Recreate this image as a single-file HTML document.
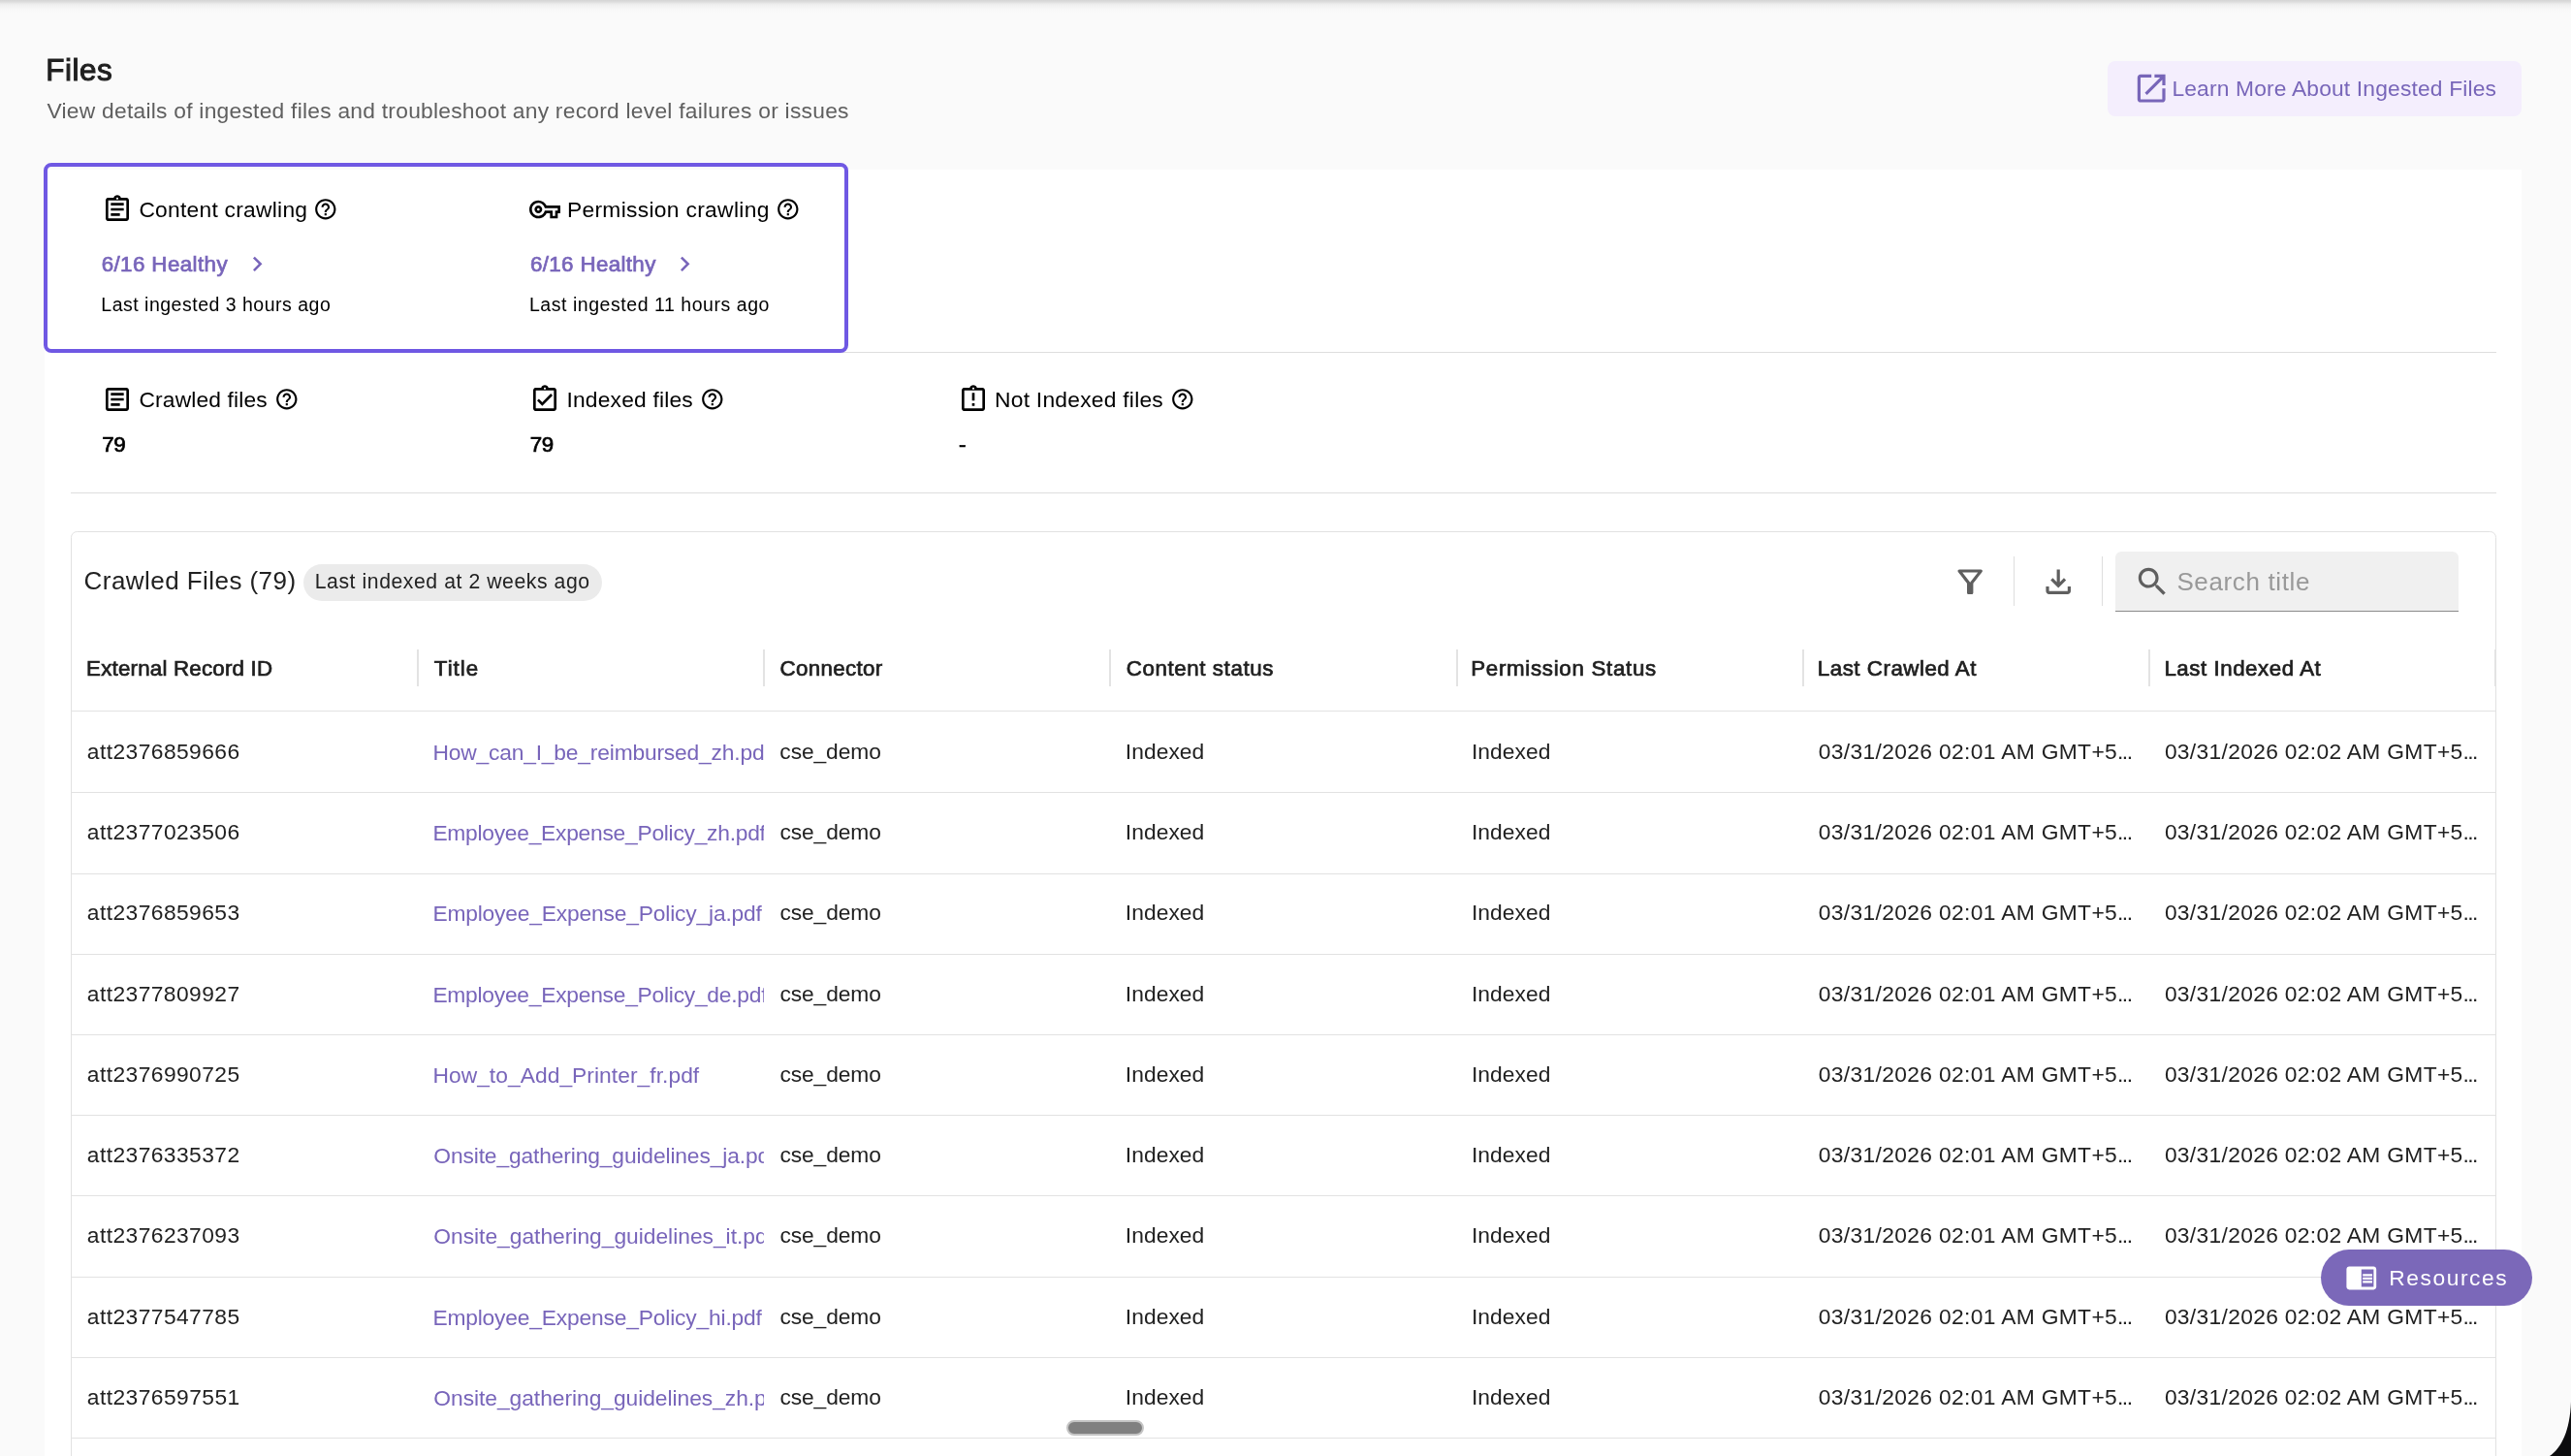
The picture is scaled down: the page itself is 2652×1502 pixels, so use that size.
<!DOCTYPE html>
<html lang="en"><head><meta charset="utf-8"><title>Files</title>
<style>
html,body{margin:0;padding:0}
#app{position:absolute;left:0;top:0;width:2652px;height:1502px;will-change:transform}
body{width:2652px;height:1502px;overflow:hidden;position:relative;background:#fafafa;font-family:"Liberation Sans",sans-serif;color:#000}
.t{position:absolute;white-space:nowrap;line-height:1;margin:0;font-weight:400;text-decoration:none}
.ic{position:absolute;display:block}
.abs{position:absolute}
#topshadow{left:0;top:0;width:2652px;height:16px;background:linear-gradient(to bottom,#d4d4d4 0px,#dddddd 2px,#ebebeb 4px,#f2f2f2 6px,#f5f5f5 8px,#f8f8f8 10px,#fafafa 14px)}
#panel{left:46px;top:175px;width:2555px;height:1327px;background:#fff}
#learn{left:2174px;top:63px;width:427px;height:57px;border-radius:8px;background:#f4eefd}
#hl{left:45px;top:168px;width:822px;height:188px;border:4px solid #6f58e3;border-radius:8px}
.hr{position:absolute;height:1px;background:#dedede}
#card{left:73px;top:548px;width:2500px;height:980px;border:1px solid #e2e2e2;border-radius:6.4px}
.vdiv{position:absolute;width:1px;background:#dedede}
#chip{left:313px;top:582px;width:308px;height:38.4px;border-radius:20px;background:#ebebeb}
#search{left:2182px;top:569px;width:354px;height:61px;background:#f0f0f0;border-radius:6.4px 6.4px 0 0;border-bottom:1.4px solid #8a8a8a}
.colsep{position:absolute;top:670px;width:2px;height:38px;background:#e3e3e3}
.row{position:absolute;left:74px;width:2500px;height:1px;background:#e2e2e2}
.el{letter-spacing:-1.55px}
.cell{position:absolute;overflow:hidden;height:60px}
#fab{left:2394.4px;top:1289px;width:217.6px;height:58px;border-radius:29px;background:#7b68b9}
#thumb{left:1100px;top:1465px;width:76px;height:12px;border-radius:8px;background:#808080;border:2px solid #c4c4c4}
#corner{right:0;bottom:0;width:60px;height:60px}
</style></head><body>

<div id="app">
<div class="abs" id="topshadow"></div>
<header>
<h1 class="t" id="h_files" style="left:47.35px;top:57px;font-size:31.4px;color:#1f1f1f;-webkit-text-stroke:1.04px #1f1f1f;letter-spacing:0.505px;">Files</h1>
<p class="t" id="h_sub" style="left:48.51px;top:103px;font-size:22.8px;color:#5f5f5f;letter-spacing:0.246px;">View details of ingested files and troubleshoot any record level failures or issues</p>
<a class="abs" id="learn"></a>
<svg class="ic" style="left:2200.00px;top:71.80px;width:38.4px;height:38.4px;" viewBox="0 0 24 24" fill="#7866b9"><path d="M19 19H5V5h7V3H5c-1.11 0-2 .9-2 2v14c0 1.1.89 2 2 2h14c1.1 0 2-.9 2-2v-7h-2v7zM14 3v2h3.59l-9.83 9.83 1.41 1.41L19 6.41V10h2V3h-7z"/></svg>
<span class="t" id="learn_t" style="left:2240.42px;top:80px;font-size:22.8px;color:#7866b9;letter-spacing:0.170px;">Learn More About Ingested Files</span>
</header>
<main>
<div class="abs" id="panel"></div>
<div class="hr" style="left:74px;top:363px;width:2501px"></div>
<div class="hr" style="left:73px;top:508px;width:2502px"></div>
<div class="abs" id="hl"></div>
<section>
<svg class="ic" style="left:104.90px;top:199.60px;width:32px;height:32px;" viewBox="0 0 24 24" fill="#000"><path d="M7 15h7v2H7zm0-4h10v2H7zm0-4h10v2H7zm12-4h-4.18C14.4 1.84 13.3 1 12 1c-1.3 0-2.4.84-2.82 2H5c-.14 0-.27.01-.4.04-.39.08-.74.28-1.01.55-.18.18-.33.4-.43.64-.1.23-.16.49-.16.77v14c0 .27.06.54.16.78s.25.45.43.64c.27.27.62.47 1.01.55.13.02.26.03.4.03h14c1.1 0 2-.9 2-2V5c0-1.1-.9-2-2-2zm-7-.25c.41 0 .75.34.75.75s-.34.75-.75.75-.75-.34-.75-.75.34-.75.75-.75zM19 19H5V5h14v14z"/></svg>
<span class="t" id="s1a" style="left:143.40px;top:205px;font-size:22.8px;color:#000;letter-spacing:0.254px;">Content crawling</span>
<svg class="ic" style="left:323.00px;top:203.40px;width:25.6px;height:25.6px;" viewBox="0 0 24 24" fill="#000"><path d="M11 18h2v-2h-2v2zm1-16C6.48 2 2 6.48 2 12s4.48 10 10 10 10-4.48 10-10S17.52 2 12 2zm0 18c-4.41 0-8-3.59-8-8s3.59-8 8-8 8 3.59 8 8-3.59 8-8 8zm0-14c-2.21 0-4 1.79-4 4h2c0-1.1.9-2 2-2s2 .9 2 2c0 2-3 1.75-3 5h2c0-2.25 3-2.5 3-5 0-2.21-1.79-4-4-4z"/></svg>
<span class="t" id="s1b" style="left:104.64px;top:262px;font-size:22.3px;color:#7865ba;-webkit-text-stroke:0.74px #7865ba;letter-spacing:0.430px;">6/16 Healthy</span>
<svg class="ic" style="left:249.80px;top:257.00px;width:30.7px;height:30.7px;" viewBox="0 0 24 24" fill="#7865ba"><path d="M10 6L8.59 7.41 13.17 12l-4.58 4.59L10 18l6-6z"/></svg>
<span class="t" id="s1c" style="left:104.29px;top:305px;font-size:19.5px;color:#000;letter-spacing:0.504px;">Last ingested 3 hours ago</span>
<svg class="ic" style="left:546.00px;top:200.20px;width:32px;height:32px;" viewBox="0 0 24 24" fill="#000"><path d="M22 19h-6v-4h-2.68c-1.14 2.42-3.6 4-6.32 4-3.86 0-7-3.14-7-7s3.14-7 7-7c2.72 0 5.17 1.58 6.32 4H24v6h-2v4zm-4-2h2v-4h2v-2H11.94l-.23-.67C11.01 8.34 9.11 7 7 7c-2.76 0-5 2.24-5 5s2.24 5 5 5c2.11 0 4.01-1.34 4.71-3.33l.23-.67H18v4zM7 15c-1.65 0-3-1.35-3-3s1.35-3 3-3 3 1.35 3 3-1.35 3-3 3zm0-4c-.55 0-1 .45-1 1s.45 1 1 1 1-.45 1-1-.45-1-1-1z"/></svg>
<span class="t" id="s2a" style="left:584.92px;top:205px;font-size:22.8px;color:#000;letter-spacing:0.317px;">Permission crawling</span>
<svg class="ic" style="left:800.40px;top:203.40px;width:25.6px;height:25.6px;" viewBox="0 0 24 24" fill="#000"><path d="M11 18h2v-2h-2v2zm1-16C6.48 2 2 6.48 2 12s4.48 10 10 10 10-4.48 10-10S17.52 2 12 2zm0 18c-4.41 0-8-3.59-8-8s3.59-8 8-8 8 3.59 8 8-3.59 8-8 8zm0-14c-2.21 0-4 1.79-4 4h2c0-1.1.9-2 2-2s2 .9 2 2c0 2-3 1.75-3 5h2c0-2.25 3-2.5 3-5 0-2.21-1.79-4-4-4z"/></svg>
<span class="t" id="s2b" style="left:546.96px;top:262px;font-size:22.3px;color:#7865ba;-webkit-text-stroke:0.74px #7865ba;letter-spacing:0.377px;">6/16 Healthy</span>
<svg class="ic" style="left:690.60px;top:257.00px;width:30.7px;height:30.7px;" viewBox="0 0 24 24" fill="#7865ba"><path d="M10 6L8.59 7.41 13.17 12l-4.58 4.59L10 18l6-6z"/></svg>
<span class="t" id="s2c" style="left:545.93px;top:305px;font-size:19.5px;color:#000;letter-spacing:0.549px;">Last ingested 11 hours ago</span>
</section>
<section>
<svg class="ic" style="left:104.90px;top:396.00px;width:32px;height:32px;" viewBox="0 0 24 24" fill="#000"><path d="M19 5v14H5V5h14m0-2H5c-1.1 0-2 .9-2 2v14c0 1.1.9 2 2 2h14c1.1 0 2-.9 2-2V5c0-1.1-.9-2-2-2z M14 17H7v-2h7v2zm3-4H7v-2h10v2zm0-4H7V7h10v2z"/></svg>
<span class="t" id="c1a" style="left:143.50px;top:401px;font-size:22.8px;color:#000;letter-spacing:0.138px;">Crawled files</span>
<svg class="ic" style="left:283.20px;top:399.10px;width:25.6px;height:25.6px;" viewBox="0 0 24 24" fill="#000"><path d="M11 18h2v-2h-2v2zm1-16C6.48 2 2 6.48 2 12s4.48 10 10 10 10-4.48 10-10S17.52 2 12 2zm0 18c-4.41 0-8-3.59-8-8s3.59-8 8-8 8 3.59 8 8-3.59 8-8 8zm0-14c-2.21 0-4 1.79-4 4h2c0-1.1.9-2 2-2s2 .9 2 2c0 2-3 1.75-3 5h2c0-2.25 3-2.5 3-5 0-2.21-1.79-4-4-4z"/></svg>
<span class="t" id="c1b" style="left:105.18px;top:448px;font-size:22.3px;color:#000;-webkit-text-stroke:0.74px #000;letter-spacing:-0.355px;">79</span>
<svg class="ic" style="left:546.00px;top:395.60px;width:32px;height:32px;" viewBox="0 0 24 24" fill="#000"><path d="M18 9l-1.41-1.42L10 14.17l-2.59-2.58L6 13l4 4zm1-6h-4.18C14.4 1.84 13.3 1 12 1c-1.3 0-2.4.84-2.82 2H5c-.14 0-.27.01-.4.04-.39.08-.74.28-1.01.55-.18.18-.33.4-.43.64-.1.23-.16.49-.16.77v14c0 .27.06.54.16.78s.25.45.43.64c.27.27.62.47 1.01.55.13.02.26.03.4.03h14c1.1 0 2-.9 2-2V5c0-1.1-.9-2-2-2zm-7-.25c.41 0 .75.34.75.75s-.34.75-.75.75-.75-.34-.75-.75.34-.75.75-.75zM19 19H5V5h14v14z"/></svg>
<span class="t" id="c2a" style="left:584.42px;top:401px;font-size:22.8px;color:#000;letter-spacing:0.196px;">Indexed files</span>
<svg class="ic" style="left:722.30px;top:399.10px;width:25.6px;height:25.6px;" viewBox="0 0 24 24" fill="#000"><path d="M11 18h2v-2h-2v2zm1-16C6.48 2 2 6.48 2 12s4.48 10 10 10 10-4.48 10-10S17.52 2 12 2zm0 18c-4.41 0-8-3.59-8-8s3.59-8 8-8 8 3.59 8 8-3.59 8-8 8zm0-14c-2.21 0-4 1.79-4 4h2c0-1.1.9-2 2-2s2 .9 2 2c0 2-3 1.75-3 5h2c0-2.25 3-2.5 3-5 0-2.21-1.79-4-4-4z"/></svg>
<span class="t" id="c2b" style="left:546.78px;top:448px;font-size:22.3px;color:#000;-webkit-text-stroke:0.74px #000;letter-spacing:-0.377px;">79</span>
<svg class="ic" style="left:988.00px;top:395.60px;width:32px;height:32px;" viewBox="0 0 24 24" fill="#000"><path d="M11 15h2v2h-2v-2zm0-8h2v6h-2V7zm8-4h-4.18C14.4 1.84 13.3 1 12 1c-1.3 0-2.4.84-2.82 2H5c-.14 0-.27.01-.4.04-.39.08-.74.28-1.01.55-.18.18-.33.4-.43.64-.1.23-.16.49-.16.77v14c0 .27.06.54.16.78s.25.45.43.64c.27.27.62.47 1.01.55.13.02.26.03.4.03h14c1.1 0 2-.9 2-2V5c0-1.1-.9-2-2-2zm-7-.25c.41 0 .75.34.75.75s-.34.75-.75.75-.75-.34-.75-.75.34-.75.75-.75zM19 19H5V5h14v14z"/></svg>
<span class="t" id="c3a" style="left:1026.02px;top:401px;font-size:22.8px;color:#000;letter-spacing:0.246px;">Not Indexed files</span>
<svg class="ic" style="left:1207.00px;top:399.10px;width:25.6px;height:25.6px;" viewBox="0 0 24 24" fill="#000"><path d="M11 18h2v-2h-2v2zm1-16C6.48 2 2 6.48 2 12s4.48 10 10 10 10-4.48 10-10S17.52 2 12 2zm0 18c-4.41 0-8-3.59-8-8s3.59-8 8-8 8 3.59 8 8-3.59 8-8 8zm0-14c-2.21 0-4 1.79-4 4h2c0-1.1.9-2 2-2s2 .9 2 2c0 2-3 1.75-3 5h2c0-2.25 3-2.5 3-5 0-2.21-1.79-4-4-4z"/></svg>
<span class="t" id="c3b" style="left:988.97px;top:448px;font-size:22.3px;color:#000;-webkit-text-stroke:0.74px #000;">-</span>
</section>
<section>
<div class="abs" id="card"></div>
<h2 class="t" id="card_t" style="left:86.61px;top:586px;font-size:26.0px;color:#212121;letter-spacing:0.443px;">Crawled Files (79)</h2>
<div class="abs" id="chip"></div>
<span class="t" id="chip_t" style="left:324.77px;top:589px;font-size:21.2px;color:#222;letter-spacing:0.566px;">Last indexed at 2 weeks ago</span>
<svg class="ic" style="left:2012.80px;top:580.70px;width:38.4px;height:38.4px;" viewBox="0 0 24 24" fill="#5f5f5f"><path d="M7 6h10l-5.01 6.3L7 6zm-2.75-.39C6.27 8.2 10 13 10 13v6c0 .55.45 1 1 1h2c.55 0 1-.45 1-1v-6s3.72-4.8 5.74-7.39c.51-.66.04-1.61-.79-1.61H5.04c-.83 0-1.3.95-.79 1.61z"/></svg>
<div class="vdiv" style="left:2077px;top:574px;height:51px"></div>
<svg class="ic" style="left:2103.80px;top:580.70px;width:38.4px;height:38.4px;" viewBox="0 0 24 24" fill="#5f5f5f"><path d="M18 15v3H6v-3H4v3c0 1.1.9 2 2 2h12c1.1 0 2-.9 2-2v-3h-2zm-1-4l-1.41-1.41L13 12.17V4h-2v8.17L8.41 9.59 7 11l5 5 5-5z"/></svg>
<div class="vdiv" style="left:2168px;top:574px;height:51px"></div>
<div class="abs" id="search"></div>
<svg class="ic" style="left:2200.80px;top:580.80px;width:38.4px;height:38.4px;" viewBox="0 0 24 24" fill="#5f5f5f"><path d="M15.5 14h-.79l-.28-.27C15.41 12.59 16 11.11 16 9.5 16 5.91 13.09 3 9.5 3S3 5.91 3 9.5 5.91 16 9.5 16c1.61 0 3.09-.59 4.23-1.57l.27.28v.79l5 4.99L20.49 19l-4.99-5zm-6 0C7.01 14 5 11.99 5 9.5S7.01 5 9.5 5 14 7.01 14 9.5 11.99 14 9.5 14z"/></svg>
<span class="t" id="search_t" style="left:2245.40px;top:587px;font-size:26.0px;color:#999999;letter-spacing:0.626px;">Search title</span>
<span class="t" id="th0" style="left:89.12px;top:679px;font-size:22.3px;color:#1f1f1f;-webkit-text-stroke:0.74px #1f1f1f;letter-spacing:0.214px;">External Record ID</span>
<div class="colsep" style="left:430.14px"></div>
<span class="t" id="th1" style="left:447.82px;top:679px;font-size:22.3px;color:#1f1f1f;-webkit-text-stroke:0.74px #1f1f1f;letter-spacing:1.026px;">Title</span>
<div class="colsep" style="left:787.29px"></div>
<span class="t" id="th2" style="left:804.57px;top:679px;font-size:22.3px;color:#1f1f1f;-webkit-text-stroke:0.74px #1f1f1f;letter-spacing:0.348px;">Connector</span>
<div class="colsep" style="left:1144.43px"></div>
<span class="t" id="th3" style="left:1161.79px;top:679px;font-size:22.3px;color:#1f1f1f;-webkit-text-stroke:0.74px #1f1f1f;letter-spacing:0.600px;">Content status</span>
<div class="colsep" style="left:1501.57px"></div>
<span class="t" id="th4" style="left:1517.26px;top:679px;font-size:22.3px;color:#1f1f1f;-webkit-text-stroke:0.74px #1f1f1f;letter-spacing:0.705px;">Permission Status</span>
<div class="colsep" style="left:1858.71px"></div>
<span class="t" id="th5" style="left:1874.86px;top:679px;font-size:22.3px;color:#1f1f1f;-webkit-text-stroke:0.74px #1f1f1f;letter-spacing:0.522px;">Last Crawled At</span>
<div class="colsep" style="left:2215.86px"></div>
<span class="t" id="th6" style="left:2232.38px;top:679px;font-size:22.3px;color:#1f1f1f;-webkit-text-stroke:0.74px #1f1f1f;letter-spacing:0.551px;">Last Indexed At</span>
<div class="colsep" style="left:2573.00px"></div>
<div class="row" style="top:733px"></div>
<div class="row" style="top:817px"></div>
<span class="t" id="r0c0" style="left:89.84px;top:764px;font-size:22.8px;color:#212121;letter-spacing:0.431px;">att2376859666</span>
<div class="cell" style="left:431.14px;top:745.00px;width:357.14px">
<a class="t" id="r0c1" style="left:15.29px;top:20px;font-size:22.8px;color:#7865ba;letter-spacing:-0.179px;">How_can_I_be_reimbursed_zh.pdf</a>
</div>
<span class="t" id="r0c2" style="left:804.36px;top:764px;font-size:22.8px;color:#212121;letter-spacing:-0.099px;">cse_demo</span>
<span class="t" id="r0c3" style="left:1160.80px;top:764px;font-size:22.8px;color:#212121;letter-spacing:0.059px;">Indexed</span>
<span class="t" id="r0c4" style="left:1517.98px;top:764px;font-size:22.8px;color:#212121;letter-spacing:0.063px;">Indexed</span>
<span class="t" id="r0c5" style="left:1875.77px;top:764px;font-size:22.8px;color:#212121;letter-spacing:0.343px;">03/31/2026 02:01 AM GMT+5<span class="el">...</span></span>
<span class="t" id="r0c6" style="left:2232.89px;top:764px;font-size:22.8px;color:#212121;letter-spacing:0.318px;">03/31/2026 02:02 AM GMT+5<span class="el">...</span></span>
<div class="row" style="top:901px"></div>
<span class="t" id="r1c0" style="left:89.84px;top:847px;font-size:22.8px;color:#212121;letter-spacing:0.431px;">att2377023506</span>
<div class="cell" style="left:431.14px;top:829.00px;width:357.14px">
<a class="t" id="r1c1" style="left:15.29px;top:19px;font-size:22.8px;color:#7865ba;letter-spacing:-0.260px;">Employee_Expense_Policy_zh.pdf</a>
</div>
<span class="t" id="r1c2" style="left:804.41px;top:847px;font-size:22.8px;color:#212121;letter-spacing:-0.106px;">cse_demo</span>
<span class="t" id="r1c3" style="left:1160.80px;top:847px;font-size:22.8px;color:#212121;letter-spacing:0.059px;">Indexed</span>
<span class="t" id="r1c4" style="left:1517.98px;top:847px;font-size:22.8px;color:#212121;letter-spacing:0.063px;">Indexed</span>
<span class="t" id="r1c5" style="left:1875.77px;top:847px;font-size:22.8px;color:#212121;letter-spacing:0.343px;">03/31/2026 02:01 AM GMT+5<span class="el">...</span></span>
<span class="t" id="r1c6" style="left:2232.89px;top:847px;font-size:22.8px;color:#212121;letter-spacing:0.318px;">03/31/2026 02:02 AM GMT+5<span class="el">...</span></span>
<div class="row" style="top:984px"></div>
<span class="t" id="r2c0" style="left:89.84px;top:930px;font-size:22.8px;color:#212121;letter-spacing:0.429px;">att2376859653</span>
<div class="cell" style="left:431.14px;top:913.00px;width:357.14px">
<a class="t" id="r2c1" style="left:15.29px;top:18px;font-size:22.8px;color:#7865ba;letter-spacing:-0.180px;">Employee_Expense_Policy_ja.pdf</a>
</div>
<span class="t" id="r2c2" style="left:804.41px;top:930px;font-size:22.8px;color:#212121;letter-spacing:-0.106px;">cse_demo</span>
<span class="t" id="r2c3" style="left:1160.80px;top:930px;font-size:22.8px;color:#212121;letter-spacing:0.059px;">Indexed</span>
<span class="t" id="r2c4" style="left:1517.98px;top:930px;font-size:22.8px;color:#212121;letter-spacing:0.063px;">Indexed</span>
<span class="t" id="r2c5" style="left:1875.77px;top:930px;font-size:22.8px;color:#212121;letter-spacing:0.343px;">03/31/2026 02:01 AM GMT+5<span class="el">...</span></span>
<span class="t" id="r2c6" style="left:2232.89px;top:930px;font-size:22.8px;color:#212121;letter-spacing:0.318px;">03/31/2026 02:02 AM GMT+5<span class="el">...</span></span>
<div class="row" style="top:1067px"></div>
<span class="t" id="r3c0" style="left:89.84px;top:1014px;font-size:22.8px;color:#212121;letter-spacing:0.425px;">att2377809927</span>
<div class="cell" style="left:431.14px;top:996.00px;width:357.14px">
<a class="t" id="r3c1" style="left:15.29px;top:19px;font-size:22.8px;color:#7865ba;letter-spacing:-0.249px;">Employee_Expense_Policy_de.pdf</a>
</div>
<span class="t" id="r3c2" style="left:804.41px;top:1014px;font-size:22.8px;color:#212121;letter-spacing:-0.106px;">cse_demo</span>
<span class="t" id="r3c3" style="left:1160.80px;top:1014px;font-size:22.8px;color:#212121;letter-spacing:0.059px;">Indexed</span>
<span class="t" id="r3c4" style="left:1517.98px;top:1014px;font-size:22.8px;color:#212121;letter-spacing:0.063px;">Indexed</span>
<span class="t" id="r3c5" style="left:1875.77px;top:1014px;font-size:22.8px;color:#212121;letter-spacing:0.343px;">03/31/2026 02:01 AM GMT+5<span class="el">...</span></span>
<span class="t" id="r3c6" style="left:2232.89px;top:1014px;font-size:22.8px;color:#212121;letter-spacing:0.318px;">03/31/2026 02:02 AM GMT+5<span class="el">...</span></span>
<div class="row" style="top:1150px"></div>
<span class="t" id="r4c0" style="left:89.84px;top:1097px;font-size:22.8px;color:#212121;letter-spacing:0.431px;">att2376990725</span>
<div class="cell" style="left:431.14px;top:1079.00px;width:357.14px">
<a class="t" id="r4c1" style="left:15.29px;top:19px;font-size:22.8px;color:#7865ba;letter-spacing:0.044px;">How_to_Add_Printer_fr.pdf</a>
</div>
<span class="t" id="r4c2" style="left:804.41px;top:1097px;font-size:22.8px;color:#212121;letter-spacing:-0.106px;">cse_demo</span>
<span class="t" id="r4c3" style="left:1160.80px;top:1097px;font-size:22.8px;color:#212121;letter-spacing:0.059px;">Indexed</span>
<span class="t" id="r4c4" style="left:1517.98px;top:1097px;font-size:22.8px;color:#212121;letter-spacing:0.063px;">Indexed</span>
<span class="t" id="r4c5" style="left:1875.77px;top:1097px;font-size:22.8px;color:#212121;letter-spacing:0.343px;">03/31/2026 02:01 AM GMT+5<span class="el">...</span></span>
<span class="t" id="r4c6" style="left:2232.89px;top:1097px;font-size:22.8px;color:#212121;letter-spacing:0.318px;">03/31/2026 02:02 AM GMT+5<span class="el">...</span></span>
<div class="row" style="top:1233px"></div>
<span class="t" id="r5c0" style="left:89.84px;top:1180px;font-size:22.8px;color:#212121;letter-spacing:0.425px;">att2376335372</span>
<div class="cell" style="left:431.14px;top:1162.00px;width:357.14px">
<a class="t" id="r5c1" style="left:16.18px;top:19px;font-size:22.8px;color:#7865ba;letter-spacing:-0.133px;">Onsite_gathering_guidelines_ja.pdf</a>
</div>
<span class="t" id="r5c2" style="left:804.41px;top:1180px;font-size:22.8px;color:#212121;letter-spacing:-0.106px;">cse_demo</span>
<span class="t" id="r5c3" style="left:1160.80px;top:1180px;font-size:22.8px;color:#212121;letter-spacing:0.059px;">Indexed</span>
<span class="t" id="r5c4" style="left:1517.98px;top:1180px;font-size:22.8px;color:#212121;letter-spacing:0.063px;">Indexed</span>
<span class="t" id="r5c5" style="left:1875.77px;top:1180px;font-size:22.8px;color:#212121;letter-spacing:0.343px;">03/31/2026 02:01 AM GMT+5<span class="el">...</span></span>
<span class="t" id="r5c6" style="left:2232.89px;top:1180px;font-size:22.8px;color:#212121;letter-spacing:0.318px;">03/31/2026 02:02 AM GMT+5<span class="el">...</span></span>
<div class="row" style="top:1317px"></div>
<span class="t" id="r6c0" style="left:89.84px;top:1263px;font-size:22.8px;color:#212121;letter-spacing:0.429px;">att2376237093</span>
<div class="cell" style="left:431.14px;top:1245.00px;width:357.14px">
<a class="t" id="r6c1" style="left:16.18px;top:19px;font-size:22.8px;color:#7865ba;letter-spacing:-0.012px;">Onsite_gathering_guidelines_it.pdf</a>
</div>
<span class="t" id="r6c2" style="left:804.41px;top:1263px;font-size:22.8px;color:#212121;letter-spacing:-0.106px;">cse_demo</span>
<span class="t" id="r6c3" style="left:1160.80px;top:1263px;font-size:22.8px;color:#212121;letter-spacing:0.059px;">Indexed</span>
<span class="t" id="r6c4" style="left:1517.98px;top:1263px;font-size:22.8px;color:#212121;letter-spacing:0.063px;">Indexed</span>
<span class="t" id="r6c5" style="left:1875.77px;top:1263px;font-size:22.8px;color:#212121;letter-spacing:0.343px;">03/31/2026 02:01 AM GMT+5<span class="el">...</span></span>
<span class="t" id="r6c6" style="left:2232.89px;top:1263px;font-size:22.8px;color:#212121;letter-spacing:0.318px;">03/31/2026 02:02 AM GMT+5<span class="el">...</span></span>
<div class="row" style="top:1400px"></div>
<span class="t" id="r7c0" style="left:89.84px;top:1347px;font-size:22.8px;color:#212121;letter-spacing:0.431px;">att2377547785</span>
<div class="cell" style="left:431.14px;top:1329.00px;width:357.14px">
<a class="t" id="r7c1" style="left:15.29px;top:19px;font-size:22.8px;color:#7865ba;letter-spacing:-0.180px;">Employee_Expense_Policy_hi.pdf</a>
</div>
<span class="t" id="r7c2" style="left:804.41px;top:1347px;font-size:22.8px;color:#212121;letter-spacing:-0.106px;">cse_demo</span>
<span class="t" id="r7c3" style="left:1160.80px;top:1347px;font-size:22.8px;color:#212121;letter-spacing:0.059px;">Indexed</span>
<span class="t" id="r7c4" style="left:1517.98px;top:1347px;font-size:22.8px;color:#212121;letter-spacing:0.063px;">Indexed</span>
<span class="t" id="r7c5" style="left:1875.77px;top:1347px;font-size:22.8px;color:#212121;letter-spacing:0.343px;">03/31/2026 02:01 AM GMT+5<span class="el">...</span></span>
<span class="t" id="r7c6" style="left:2232.89px;top:1347px;font-size:22.8px;color:#212121;letter-spacing:0.318px;">03/31/2026 02:02 AM GMT+5<span class="el">...</span></span>
<div class="row" style="top:1483px"></div>
<span class="t" id="r8c0" style="left:89.84px;top:1430px;font-size:22.8px;color:#212121;letter-spacing:0.439px;">att2376597551</span>
<div class="cell" style="left:431.14px;top:1412.00px;width:357.14px">
<a class="t" id="r8c1" style="left:16.18px;top:19px;font-size:22.8px;color:#7865ba;letter-spacing:-0.040px;">Onsite_gathering_guidelines_zh.pdf</a>
</div>
<span class="t" id="r8c2" style="left:804.41px;top:1430px;font-size:22.8px;color:#212121;letter-spacing:-0.106px;">cse_demo</span>
<span class="t" id="r8c3" style="left:1160.80px;top:1430px;font-size:22.8px;color:#212121;letter-spacing:0.059px;">Indexed</span>
<span class="t" id="r8c4" style="left:1517.98px;top:1430px;font-size:22.8px;color:#212121;letter-spacing:0.063px;">Indexed</span>
<span class="t" id="r8c5" style="left:1875.77px;top:1430px;font-size:22.8px;color:#212121;letter-spacing:0.343px;">03/31/2026 02:01 AM GMT+5<span class="el">...</span></span>
<span class="t" id="r8c6" style="left:2232.89px;top:1430px;font-size:22.8px;color:#212121;letter-spacing:0.318px;">03/31/2026 02:02 AM GMT+5<span class="el">...</span></span>
<div class="abs" id="thumb"></div>
</section>
</main>
<div class="abs" id="fab"></div>
<svg class="ic" style="left:2418.60px;top:1301.30px;width:33.6px;height:33.6px;" viewBox="0 0 24 24" fill="#fff"><path d="M13 12h7v1.5h-7zm0-2.5h7V11h-7zm0 5h7V16h-7zM21 4H3c-1.1 0-2 .9-2 2v13c0 1.1.9 2 2 2h18c1.1 0 2-.9 2-2V6c0-1.1-.9-2-2-2zm0 15h-9V6h9v13z"/></svg>
<span class="t" id="fab_t" style="left:2464.36px;top:1307px;font-size:22.8px;color:#fff;letter-spacing:1.539px;">Resources</span>
<svg class="abs" id="corner" viewBox="0 0 60 60"><path d="M60 4 C59 34 50 52 38 60 L60 60 Z" fill="#0c0c0e"/></svg>
</div>
</body></html>
